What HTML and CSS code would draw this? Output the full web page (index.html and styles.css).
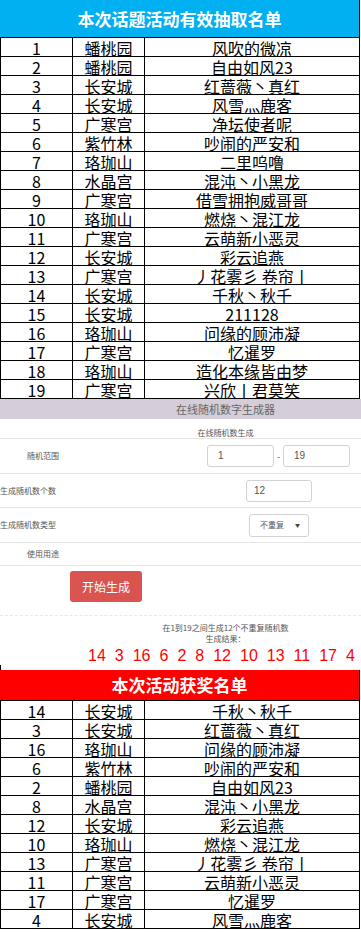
FILE: index.html
```html
<!DOCTYPE html>
<html lang="zh-CN">
<head>
<meta charset="utf-8">
<title>本次话题活动有效抽取名单</title>
<link rel="stylesheet" href="styles.css">
</head>
<body>
<div class="sheet">
  <div class="sheet-head head-blue">本次话题活动有效抽取名单</div>
  <div class="row"><div class="c">1</div><div class="c">蟠桃园</div><div class="c">风吹的微凉</div></div>
  <div class="row"><div class="c">2</div><div class="c">蟠桃园</div><div class="c">自由如风23</div></div>
  <div class="row"><div class="c">3</div><div class="c">长安城</div><div class="c">红蔷薇丶真红</div></div>
  <div class="row"><div class="c">4</div><div class="c">长安城</div><div class="c">风雪灬鹿客</div></div>
  <div class="row"><div class="c">5</div><div class="c">广寒宫</div><div class="c">净坛使者呢</div></div>
  <div class="row"><div class="c">6</div><div class="c">紫竹林</div><div class="c">吵闹的严安和</div></div>
  <div class="row"><div class="c">7</div><div class="c">珞珈山</div><div class="c">二里呜噜</div></div>
  <div class="row"><div class="c">8</div><div class="c">水晶宫</div><div class="c">混沌丶小黑龙</div></div>
  <div class="row"><div class="c">9</div><div class="c">广寒宫</div><div class="c">借雪拥抱威哥哥</div></div>
  <div class="row"><div class="c">10</div><div class="c">珞珈山</div><div class="c">燃烧丶混江龙</div></div>
  <div class="row"><div class="c">11</div><div class="c">广寒宫</div><div class="c">云萌新小恶灵</div></div>
  <div class="row"><div class="c">12</div><div class="c">长安城</div><div class="c">彩云追燕</div></div>
  <div class="row"><div class="c">13</div><div class="c">广寒宫</div><div class="c">丿花雾彡 卷帘丨</div></div>
  <div class="row"><div class="c">14</div><div class="c">长安城</div><div class="c">千秋丶秋千</div></div>
  <div class="row"><div class="c">15</div><div class="c">长安城</div><div class="c">211128</div></div>
  <div class="row"><div class="c">16</div><div class="c">珞珈山</div><div class="c">问缘的顾沛凝</div></div>
  <div class="row"><div class="c">17</div><div class="c">广寒宫</div><div class="c">忆暹罗</div></div>
  <div class="row"><div class="c">18</div><div class="c">珞珈山</div><div class="c">造化本缘皆由梦</div></div>
  <div class="row"><div class="c">19</div><div class="c">广寒宫</div><div class="c">兴欣丨君莫笑</div></div>
</div>

<div class="gen">
  <div class="gen-title">在线随机数字生成器</div>
  <div class="gen-sub">在线随机数生成</div>
  <div class="gen-row row-a">
    <div class="lbl lbl-a">随机范围</div>
    <div class="inp inp-a">1</div>
    <div class="dash">-</div>
    <div class="inp inp-a">19</div>
  </div>
  <div class="gen-row row-b">
    <div class="lbl lbl-b">生成随机数个数</div>
    <div class="inp inp-b">12</div>
  </div>
  <div class="gen-row row-c">
    <div class="lbl lbl-c">生成随机数类型</div>
    <div class="sel"><span>不重复</span><span class="caret">▼</span></div>
  </div>
  <div class="gen-row row-d">
    <div class="lbl lbl-d">使用用途</div>
  </div>
  <div class="btn-wrap"><div class="btn">开始生成</div></div>
  <div class="result-text">
    <div>在1到19之间生成12个不重复随机数</div>
    <div>生成结果：</div>
  </div>
  <div class="nums">
    <span>14</span><span>3</span><span>16</span><span>6</span><span>2</span><span>8</span><span>12</span><span>10</span><span>13</span><span>11</span><span>17</span><span>4</span>
  </div>
  <div class="mark"></div>
</div>

<div class="sheet">
  <div class="sheet-head head-red">本次活动获奖名单</div>
  <div class="row"><div class="c">14</div><div class="c">长安城</div><div class="c">千秋丶秋千</div></div>
  <div class="row"><div class="c">3</div><div class="c">长安城</div><div class="c">红蔷薇丶真红</div></div>
  <div class="row"><div class="c">16</div><div class="c">珞珈山</div><div class="c">问缘的顾沛凝</div></div>
  <div class="row"><div class="c">6</div><div class="c">紫竹林</div><div class="c">吵闹的严安和</div></div>
  <div class="row"><div class="c">2</div><div class="c">蟠桃园</div><div class="c">自由如风23</div></div>
  <div class="row"><div class="c">8</div><div class="c">水晶宫</div><div class="c">混沌丶小黑龙</div></div>
  <div class="row"><div class="c">12</div><div class="c">长安城</div><div class="c">彩云追燕</div></div>
  <div class="row"><div class="c">10</div><div class="c">珞珈山</div><div class="c">燃烧丶混江龙</div></div>
  <div class="row"><div class="c">13</div><div class="c">广寒宫</div><div class="c">丿花雾彡 卷帘丨</div></div>
  <div class="row"><div class="c">11</div><div class="c">广寒宫</div><div class="c">云萌新小恶灵</div></div>
  <div class="row"><div class="c">17</div><div class="c">广寒宫</div><div class="c">忆暹罗</div></div>
  <div class="row"><div class="c">4</div><div class="c">长安城</div><div class="c">风雪灬鹿客</div></div>
</div>
</body>
</html>
```

FILE: styles.css
```css
* { box-sizing: border-box; }
html, body { margin: 0; padding: 0; background: #fff; }
body {
  width: 361px;
  font-family: "Noto Sans CJK SC", "Noto Sans", sans-serif;
  color: #000;
  overflow-x: hidden;
}

/* spreadsheet tables */
.sheet { width: 360px; }
.sheet-head {
  color: #fff;
  font-weight: bold;
  font-size: 17px;
  text-align: center;
  border-right: 1px solid #000;
  border-bottom: 1px solid #000;
}
.head-blue { background: #00b0f0; height: 38px; line-height: 36px; padding-top: 1px; }
.head-red { background: #ff0000; height: 31px; line-height: 30px; }

.row {
  display: grid;
  grid-template-columns: 72px 72px 1fr;
  height: 19px;
  border-left: 1px solid #000;
  border-right: 1px solid #000;
  border-bottom: 1px solid #000;
}
.c {
  font-size: 16px;
  line-height: 16px;
  padding-top: 2px;
  height: 18px;
  text-align: center;
  white-space: nowrap;
}
.c:nth-child(1), .c:nth-child(2) { border-right: 1px solid #000; }

/* generator */
.gen { width: 361px; color: #555; }
.gen-title {
  background: #d5cdd9;
  height: 20px;
  line-height: 20px;
  font-size: 11px;
  color: #666;
  text-align: center;
  padding-left: 90px;
}
.gen-sub {
  height: 20px;
  font-size: 8px;
  line-height: 10px;
  padding-top: 9px;
  text-align: center;
  padding-left: 90px;
  border-bottom: 1px solid #e6e6e6;
}
.gen-row {
  display: flex;
  align-items: center;
  border-bottom: 1px solid #e6e6e6;
}
.row-a { height: 35px; }
.row-b { height: 34px; }
.row-c { height: 35px; }
.row-d { height: 23px; }
.lbl { font-size: 8px; line-height: 10px; flex: none; white-space: nowrap; }
.lbl-a { width: 207px; padding-left: 27px; }
.lbl-b { width: 246px; }
.lbl-c { width: 249px; }
.lbl-d { padding-left: 27px; }

.inp, .sel {
  border: 1px solid #d2d2d2;
  border-radius: 3px;
  background: #fff;
  height: 22px;
  font-family: "Liberation Sans", "Noto Sans CJK SC", sans-serif;
  font-size: 10px;
  line-height: 20px;
  color: #555;
  flex: none;
}
.inp-a { width: 67px; padding-left: 10px; }
.inp-b { width: 66px; padding-left: 7px; }
.dash { width: 9px; text-align: center; font-size: 9px; flex: none; }
.sel {
  width: 60px;
  height: 23px;
  display: flex;
  align-items: center;
  padding-left: 10px;
  font-family: "Noto Sans CJK SC", sans-serif;
  font-size: 8px;
}
.caret { font-size: 5px; margin-left: 11px; color: #444; }

.btn-wrap {
  padding: 5px 0 13px 70px;
  border-bottom: 1px dashed #e8e8e8;
}
.btn {
  width: 72px;
  height: 31px;
  background: #d9534f;
  border-radius: 3px;
  color: #fff;
  font-size: 12px;
  line-height: 31px;
  text-align: center;
}
.result-text {
  padding-top: 6px;
  padding-left: 90px;
  text-align: center;
  font-size: 8px;
  line-height: 11px;
}
.nums {
  display: flex;
  gap: 9px;
  padding-left: 88px;
  margin-top: 3px;
  height: 18px;
  font-family: "Liberation Sans", Arial, sans-serif;
  font-size: 16px;
  line-height: 18px;
  color: #ff0000;
  white-space: nowrap;
}
.mark { height: 5px; width: 1px; background: #000; }
```
